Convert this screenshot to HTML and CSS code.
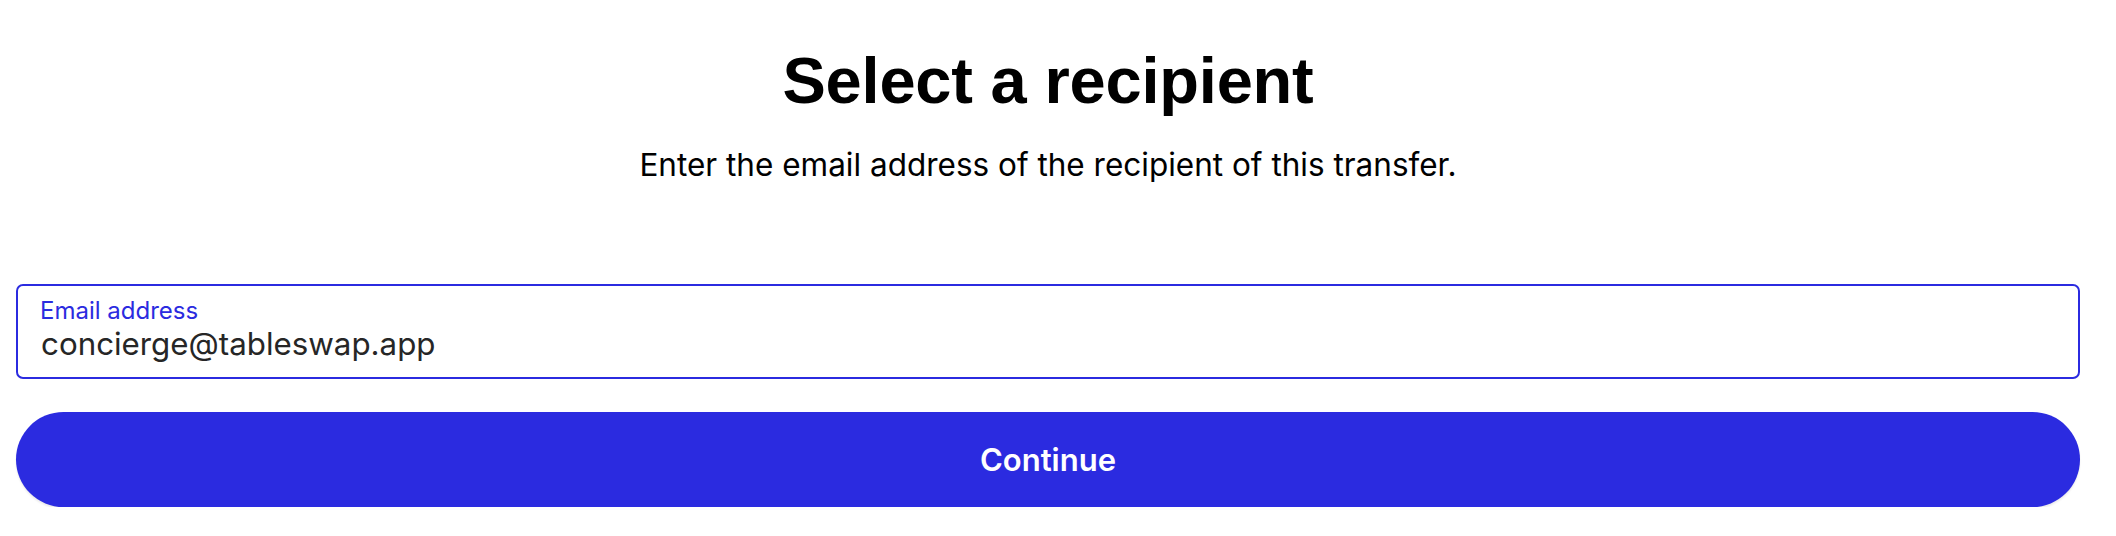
FILE: index.html
```html
<!DOCTYPE html>
<html lang="en">
<head>
<meta charset="utf-8">
<title>Select a recipient</title>
<link rel="stylesheet" href="styles.css">
</head>
<body>
<main class="page">
  <header class="intro">
    <h1 class="title">Select a recipient</h1>
    <p class="subtitle">Enter the email address of the recipient of this transfer.</p>
  </header>
  <form class="form">
    <label class="field">
      <span class="field-label">Email address</span>
      <input class="field-input" type="email" value="concierge@tableswap.app">
    </label>
    <button class="btn-primary" type="button">Continue</button>
  </form>
</main>
</body>
</html>
```

FILE: styles.css
```css
html, body {
  margin: 0;
  padding: 0;
  background: #ffffff;
}

.page {
  padding: 0 36px 0 16px;
  font-family: Inter, "Noto Sans", sans-serif;
  color: #000000;
}

.intro {
  display: flex;
  flex-direction: column;
  align-items: center;
  padding-top: 43px;
}

.title {
  margin: 0;
  font-family: "Liberation Sans", Arial, sans-serif;
  font-weight: 700;
  font-size: 65px;
  line-height: 76px;
  letter-spacing: -0.2px;
  color: #000000;
}

.subtitle {
  margin: 28px 0 0;
  font-size: 31.5px;
  line-height: 36px;
  color: #000000;
}

.form {
  display: flex;
  flex-direction: column;
  gap: 33px;
  margin-top: 101px;
}

.field {
  display: flex;
  flex-direction: column;
  gap: 2px;
  border: 2px solid #2b2be0;
  border-radius: 7px;
  padding: 12px 22px 15px;
}

.field-label {
  font-size: 24px;
  line-height: 26px;
  color: #2b2be0;
}

.field-input {
  border: none;
  outline: none;
  padding: 0 0 0 1px;
  margin: 0;
  background: transparent;
  font-family: Inter, "Noto Sans", sans-serif;
  font-size: 31.3px;
  line-height: 36px;
  height: 36px;
  color: #262626;
}

.btn-primary {
  height: 95px;
  border: none;
  border-radius: 48px;
  background: #2b2be0;
  color: #ffffff;
  font-family: Inter, "Noto Sans", sans-serif;
  font-weight: 600;
  font-size: 31px;
  box-shadow: 0 2px 2px rgba(0, 0, 0, 0.08);
  cursor: pointer;
}
```
